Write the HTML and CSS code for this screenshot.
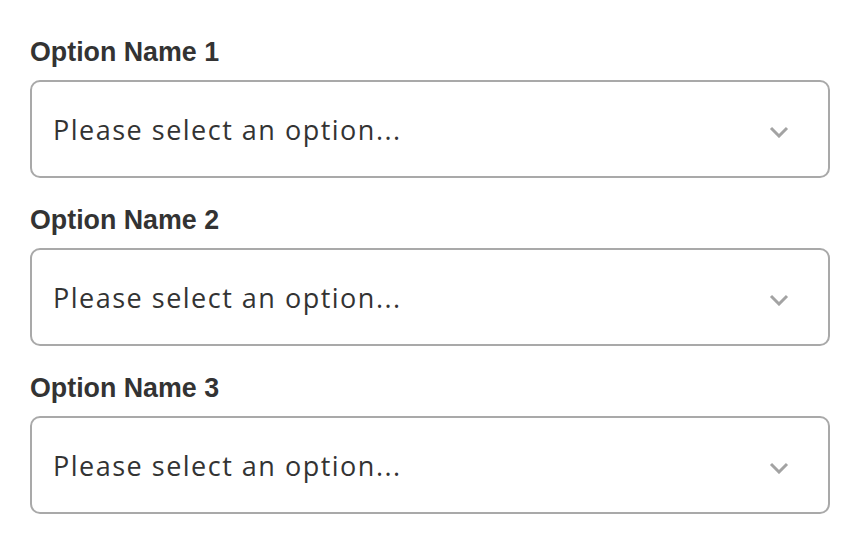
FILE: index.html
```html
<!DOCTYPE html>
<html lang="en">
<head>
<meta charset="utf-8">
<title>Options</title>
<link rel="stylesheet" href="styles.css">
</head>
<body>
<form class="form">
  <div class="field">
    <label class="label">Option Name 1</label>
    <div class="select">
      <span class="placeholder">Please select an option...</span>
      <svg class="chev" viewBox="0 0 20 12" width="20" height="12"><polyline points="2,2 10,10 18,2" fill="none" stroke="currentColor" stroke-width="3"/></svg>
    </div>
  </div>
  <div class="field">
    <label class="label">Option Name 2</label>
    <div class="select">
      <span class="placeholder">Please select an option...</span>
      <svg class="chev" viewBox="0 0 20 12" width="20" height="12"><polyline points="2,2 10,10 18,2" fill="none" stroke="currentColor" stroke-width="3"/></svg>
    </div>
  </div>
  <div class="field">
    <label class="label">Option Name 3</label>
    <div class="select">
      <span class="placeholder">Please select an option...</span>
      <svg class="chev" viewBox="0 0 20 12" width="20" height="12"><polyline points="2,2 10,10 18,2" fill="none" stroke="currentColor" stroke-width="3"/></svg>
    </div>
  </div>
</form>
</body>
</html>
```
FILE: styles.css
```css
html, body {
  margin: 0;
  padding: 0;
  background: #ffffff;
}
.form {
  display: flex;
  flex-direction: column;
  gap: 27px;
  padding: 37px 0 0 30px;
  width: 800px;
}
.field {
  display: flex;
  flex-direction: column;
}
.label {
  font-family: "Liberation Sans", Arial, sans-serif;
  font-weight: bold;
  font-size: 26.8px;
  line-height: 30px;
  color: #333333;
  margin-bottom: 13px;
}
.select {
  box-sizing: border-box;
  height: 98px;
  border: 2px solid #a9a9a9;
  border-radius: 10px;
  display: flex;
  align-items: center;
  justify-content: space-between;
  padding: 0 39px 0 21px;
}
.placeholder {
  font-family: "Open Sans", sans-serif;
  font-size: 27px;
  letter-spacing: 1.5px;
  color: #333333;
}
.chev {
  color: #a3a3a3;
  margin-top: 6px;
}
```
